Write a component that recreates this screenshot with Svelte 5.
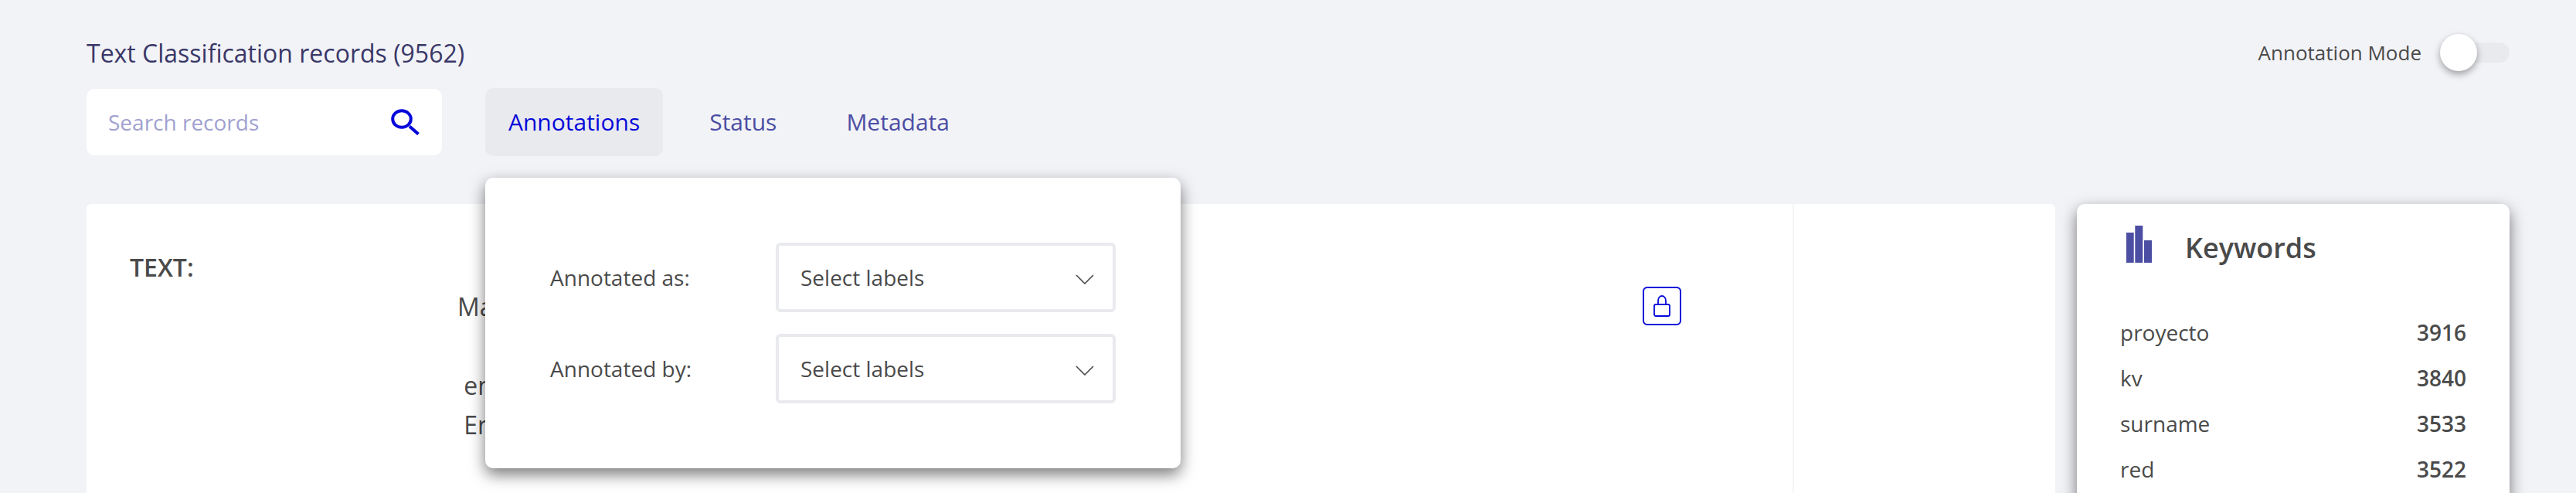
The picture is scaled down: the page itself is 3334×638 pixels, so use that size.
<script>
  let query = $state('');
  let annotationMode = $state(false);
  let activeTab = $state('Annotations');

  const tabs = ['Annotations', 'Status', 'Metadata'];
  const filters = [
    { id: 'annotated-as', label: 'Annotated as:' },
    { id: 'annotated-by', label: 'Annotated by:' }
  ];
  const keywords = [
    { word: 'proyecto', count: 3916 },
    { word: 'kv', count: 3840 },
    { word: 'surname', count: 3533 },
    { word: 'red', count: 3522 }
  ];
  const recordText = 'Ma\n\n en\n En';
</script>

<div class="page">
  <header>
    <div class="heading">
      <h1>Text Classification records (9562)</h1>
      <label class="mode">
        <span>Annotation Mode</span>
        <input type="checkbox" role="switch" bind:checked={annotationMode} />
      </label>
    </div>

    <div class="toolbar">
      <div class="search">
        <input type="text" placeholder="Search records" aria-label="Search records" bind:value={query} />
        <button type="button" class="search-button" aria-label="Search">
          <svg viewBox="0 0 38 34" width="38" height="34" fill="none" stroke="#0508d9">
            <ellipse cx="14" cy="13" rx="11.8" ry="10.8" stroke-width="4" />
            <path d="M24 22.5 35.5 32.5" stroke-width="4.2" />
          </svg>
        </button>
      </div>

      <nav class="tabs">
        {#each tabs as tab}
          <div class="tab-wrap">
            <button type="button" class="tab" class:active={tab === activeTab} onclick={() => (activeTab = tab)}>{tab}</button>
            {#if tab === 'Annotations' && activeTab === tab}
              <div class="popover">
                {#each filters as filter}
                  <div class="filter">
                    <label for={filter.id}>{filter.label}</label>
                    <div class="select">
                      <select id={filter.id}>
                        <option>Select labels</option>
                      </select>
                      <svg viewBox="0 0 24 18" width="24" height="18" fill="none" stroke="#4a4a4a" stroke-width="1.6" aria-hidden="true">
                        <path d="M1 6 12 17 23 6" />
                      </svg>
                    </div>
                  </div>
                {/each}
              </div>
            {/if}
          </div>
        {/each}
      </nav>
    </div>
  </header>

  <main>
    <article class="record">
      <div class="content">
        <div class="text">
          <strong>TEXT:</strong>
          <p>{recordText}</p>
        </div>
        <button type="button" class="lock" aria-label="Lock record">
          <svg viewBox="0 0 22 28" width="22" height="28" fill="none" stroke="#0508d9" stroke-width="1.8">
            <rect x="1" y="12" width="20" height="15" rx="2" />
            <path d="M6 12V7a5 6 0 0 1 10 0v5" />
          </svg>
        </button>
      </div>
      <div class="labels"></div>
    </article>

    <aside class="keywords">
      <h2>
        <svg viewBox="0 0 34 48" width="34" height="48" fill="#4c4ea3" aria-hidden="true">
          <rect x="0" y="9" width="9.7" height="39" />
          <rect x="11.3" y="0" width="10" height="48" />
          <rect x="23" y="19" width="10" height="29" />
        </svg>
        Keywords
      </h2>
      <table>
        <tbody>
          {#each keywords as item}
            <tr>
              <th scope="row">{item.word}</th>
              <td>{item.count}</td>
            </tr>
          {/each}
        </tbody>
      </table>
    </aside>
  </main>
</div>

<style>
  :global(body) {
    margin: 0;
    background: #f2f3f7;
  }

  .page {
    box-sizing: border-box;
    height: 100vh;
    overflow: hidden;
    display: flex;
    flex-direction: column;
    padding: 44px 86px 0 112px;
    background: #f2f3f7;
    color: #4a4a4a;
    font-family: 'Open Sans', 'Noto Sans', sans-serif;
    font-size: 28px;
    line-height: 40px;
  }

  button,
  input,
  select {
    margin: 0;
    padding: 0;
    border: 0;
    background: none;
    color: inherit;
    font: inherit;
  }

  svg {
    display: block;
    flex: none;
  }

  .heading {
    display: flex;
    align-items: flex-start;
    justify-content: space-between;
    height: 48px;
  }

  h1 {
    margin: 0;
    color: #3a3868;
    font-size: 32px;
    font-weight: 400;
    line-height: 50px;
  }

  .mode {
    display: flex;
    align-items: center;
    gap: 24px;
    height: 48px;
    font-size: 26px;
  }

  .mode input {
    appearance: none;
    display: flex;
    align-items: center;
    width: 90px;
    height: 26px;
    border-radius: 13px;
    background: #e9eaee;
  }

  .mode input::before {
    content: '';
    width: 48px;
    height: 48px;
    border-radius: 50%;
    background: #fff;
    box-shadow: 0 4px 10px rgba(0, 0, 0, 0.35);
  }

  .mode input:checked {
    justify-content: flex-end;
  }

  .toolbar {
    display: flex;
    align-items: center;
    gap: 56px;
    margin-top: 22px;
    height: 88px;
  }

  .search {
    box-sizing: border-box;
    display: flex;
    align-items: center;
    width: 460px;
    height: 86px;
    padding: 0 28px;
    border-radius: 10px;
    background: #fff;
  }

  .search input {
    flex: 1;
    min-width: 0;
    outline: none;
  }

  .search input::placeholder {
    color: #a0a1d0;
    opacity: 1;
  }

  .tabs {
    display: flex;
    gap: 30px;
  }

  .tab-wrap {
    position: relative;
  }

  .tab {
    height: 88px;
    padding: 0 30px;
    border-radius: 10px;
    color: #4c4ea3;
    font-size: 30px;
  }

  .tab.active {
    background: #e9eaee;
    color: #0508d9;
  }

  .popover {
    position: absolute;
    z-index: 2;
    top: 116px;
    left: 0;
    box-sizing: border-box;
    display: flex;
    flex-direction: column;
    gap: 28px;
    width: 900px;
    padding: 84px;
    border-radius: 10px;
    background: #fff;
    box-shadow: 0 8px 20px rgba(0, 0, 0, 0.53);
  }

  .filter {
    display: flex;
    align-items: center;
    justify-content: space-between;
  }

  .select {
    display: grid;
    align-items: center;
    width: 440px;
  }

  .select > * {
    grid-area: 1 / 1;
  }

  .select select {
    appearance: none;
    box-sizing: border-box;
    width: 100%;
    height: 90px;
    padding: 0 28px;
    border: 4px solid #e9eaee;
    border-radius: 6px;
    background: #fff;
  }

  .select svg {
    justify-self: end;
    margin-right: 28px;
    pointer-events: none;
  }

  main {
    flex: 1;
    display: grid;
    grid-template-columns: minmax(0, 1fr) 560px;
    gap: 28px;
    margin-top: 62px;
  }

  .record {
    display: flex;
    border-radius: 6px 6px 0 0;
    background: #fff;
  }

  .content {
    flex: 1;
    display: flex;
    justify-content: space-between;
    align-items: flex-start;
    padding: 56px 144px 0 56px;
  }

  .text {
    font-size: 32px;
    line-height: 51px;
  }

  .text strong {
    font-weight: 600;
  }

  .text p {
    margin: 0;
    padding-left: 424px;
    white-space: pre;
  }

  .lock {
    box-sizing: border-box;
    display: flex;
    align-items: center;
    justify-content: center;
    width: 50px;
    height: 50px;
    margin-top: 51px;
    border: 2px solid #0508d9;
    border-radius: 6px;
  }

  .labels {
    box-sizing: border-box;
    width: 340px;
    border-left: 2px solid #f5f5f6;
  }

  .keywords {
    padding: 28px 56px 0;
    border-radius: 10px 10px 0 0;
    background: #fff;
    box-shadow: 0 8px 20px rgba(0, 0, 0, 0.53);
  }

  h2 {
    display: flex;
    gap: 42px;
    margin: 0 0 60px;
    padding-left: 8px;
    font-size: 36px;
    font-weight: 600;
    line-height: 58px;
    height: 58px;
  }

  table {
    width: 100%;
    border-collapse: collapse;
  }

  th,
  td {
    height: 59px;
    padding: 0;
    vertical-align: top;
    line-height: 40px;
  }

  th {
    font-weight: 400;
    text-align: left;
  }

  td {
    font-weight: 600;
    text-align: right;
  }
</style>
